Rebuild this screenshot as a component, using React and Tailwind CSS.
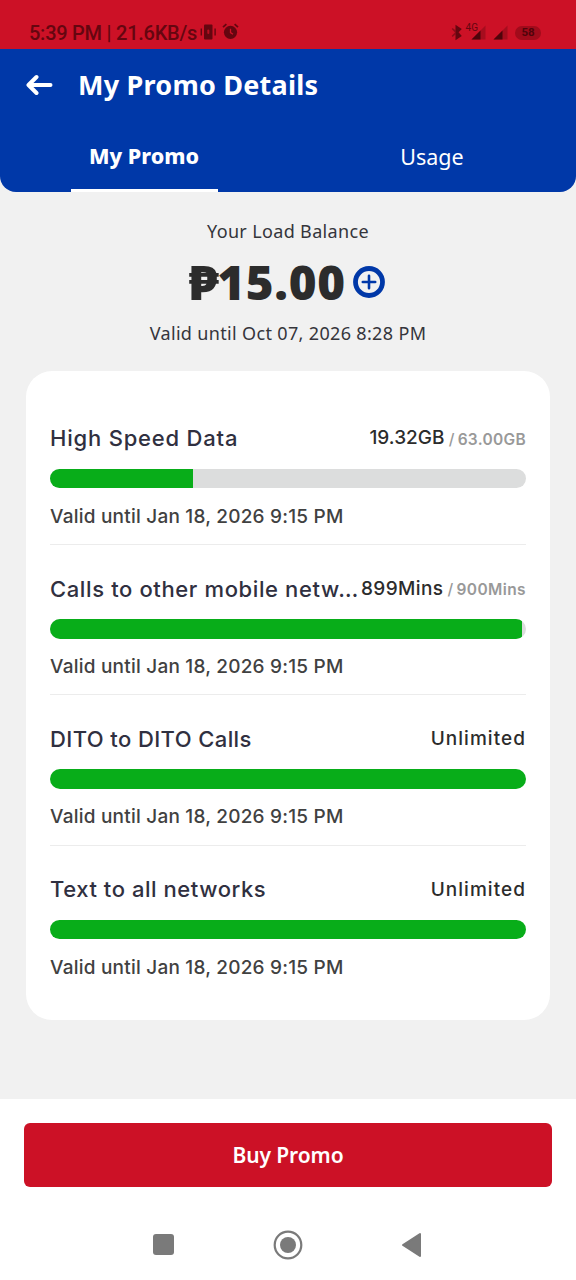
import React from "react";

const promos = [
  { name: "High Speed Data", nameStyle: "tracking-[0.8px]", left: "19.32GB", leftStyle: "tracking-[0.05px]", total: "63.00GB", totalStyle: "tracking-[0.3px]", percent: 30 },
  { name: "Calls to other mobile netw…", nameStyle: "tracking-[0.62px]", left: "899Mins", leftStyle: "tracking-[0.4px]", total: "900Mins", totalStyle: "tracking-[0.4px]", percent: 99.1 },
  { name: "DITO to DITO Calls", nameStyle: "tracking-[0.4px]", left: "Unlimited", leftStyle: "tracking-[1.05px]", percent: 100 },
  { name: "Text to all networks", nameStyle: "tracking-[0.55px]", left: "Unlimited", leftStyle: "tracking-[1.05px]", percent: 100 },
];

const VibrateIcon = () => (
  <svg width="18" height="18" viewBox="0 0 18 18" fill="#650610">
    <rect x="5" y="1.5" width="8.5" height="15" rx="1" />
    <rect x="1.6" y="5.5" width="1.4" height="7" />
    <rect x="15.4" y="5.5" width="1.4" height="7" />
    <rect x="8.3" y="6.5" width="2" height="4.5" rx="1" fill="#b80f20" />
  </svg>
);

const AlarmIcon = () => (
  <svg width="17" height="17" viewBox="0 0 17 17" fill="none" stroke="#650610">
    <circle cx="8.5" cy="9.3" r="6.6" fill="#650610" stroke="none" />
    <path d="M1 4.2 4.4 1.2M16 4.2 12.6 1.2" strokeWidth="1.8" />
    <path d="M8.5 5.8v3.8l2.5 1.7" stroke="#cc1126" strokeWidth="1.3" />
  </svg>
);

const BluetoothIcon = () => (
  <svg width="12" height="17" viewBox="0 0 12 17" fill="#650610">
    <path d="M4.5.8 10.8 5 7.6 8.3l3.2 3.6-6.3 4.3z" />
    <path d="M4.5 6.2 1.6 3.9.7 5 4 8.4.7 11.8l.9 1.1 2.9-2.3z" opacity=".6" />
  </svg>
);

const SignalIcon = () => (
  <svg width="15" height="15" viewBox="0 0 15 15">
    <path d="M14.5.5v14H.5z" fill="#a60d1e" />
    <path d="M9.5 5.5v9h-9z" fill="#4f040b" />
  </svg>
);

const StatusBar = () => (
  <div className="flex h-[49px] items-end bg-[#cc1126] pr-[35px] pb-1 pl-[29px] text-[#650610]">
    <div className="flex h-6 items-center">
      <span className="font-[Roboto,sans-serif] text-[20px] leading-6 font-medium tracking-[-0.25px] whitespace-nowrap">5:39 PM | 21.6KB/s</span>
      <span className="ml-[2px] flex items-center gap-[5px] pb-[3px]">
        <VibrateIcon />
        <AlarmIcon />
      </span>
    </div>
    <div className="ml-auto flex h-6 items-center pb-px">
      <BluetoothIcon />
      <span className="ml-[3px] self-start font-[Roboto,sans-serif] text-[10px] leading-[13px]">4G</span>
      <span className="-ml-[7px]"><SignalIcon /></span>
      <span className="ml-[7px]"><SignalIcon /></span>
      <span className="ml-[7px] flex h-[14px] w-[26px] items-center justify-center rounded-full bg-[#a10b1b] font-[Roboto,sans-serif] text-[11.5px] font-bold text-[#4f040b]">58</span>
    </div>
  </div>
);

const Header = () => (
  <header className="bg-[#f1f1f1]">
    <div className="rounded-b-2xl bg-[#0038a8] font-['Noto_Sans',sans-serif] text-white">
      <div className="flex h-[72px] items-center pl-[26px]">
        <svg width="27" height="22" viewBox="0 0 27 22" fill="none" stroke="currentColor" strokeWidth="4" strokeLinecap="round" strokeLinejoin="round">
          <path d="M10.5 3 2.5 11l8 8M3 11h21.5" />
        </svg>
        <h1 className="ml-[25px] text-[27px] leading-9 font-bold tracking-[0.22px] whitespace-nowrap">My Promo Details</h1>
      </div>
      <div className="grid h-[71px] grid-cols-2">
        <div className="flex justify-center">
          <span className="flex w-[147px] items-center justify-center border-b-[3.5px] border-white pt-0.5 text-[21.5px] font-extrabold">My Promo</span>
        </div>
        <span className="flex items-center justify-center pt-px text-[21.5px]">Usage</span>
      </div>
    </div>
  </header>
);

const Balance = () => (
  <section className="flex flex-col items-center font-['Noto_Sans',sans-serif] text-[#35353b]">
    <p className="mt-6 text-[18px] leading-[30px] tracking-[0.35px]">Your Load Balance</p>
    <div className="mt-2 flex h-[56px] items-center pr-[5px] text-[#2c2c2c]">
      <span className="flex text-[47.5px] leading-[56px] font-black tracking-[0.7px]">
        <span className="mr-[3px] inline-block origin-left translate-x-[3px] scale-x-110">₱</span>
        15.00
      </span>
      <svg className="ml-[7px]" width="32" height="32" viewBox="0 0 32 32" fill="none" stroke="#0038a8" strokeLinecap="round">
        <circle cx="16" cy="16" r="13.5" strokeWidth="4.8" />
        <path d="M16 9.8v12.4M9.8 16h12.4" strokeWidth="2.6" />
      </svg>
    </div>
    <p className="mt-2 text-[18px] leading-[30px] tracking-[0.34px]">Valid until Oct 07, 2026 8:28 PM</p>
  </section>
);

const PromoRow = ({ promo, last }) => (
  <div className={`h-[150.4px] pt-[26px] ${last ? "" : "border-b border-[#ececec]"}`}>
    <div className="flex h-9 items-center justify-between whitespace-nowrap">
      <span className={`text-[22px] font-medium text-[#303040] ${promo.nameStyle}`}>{promo.name}</span>
      <span className="flex items-center text-[19px] font-medium text-[#2c2c2c]">
        <span className={promo.leftStyle}>{promo.left}</span>
        {promo.total && (
          <span className="flex pt-px text-[15.5px] text-[#999]">
            <span className="w-[13px] pl-[4px]">/</span>
            <span className={`font-semibold ${promo.totalStyle}`}>{promo.total}</span>
          </span>
        )}
      </span>
    </div>
    <div className="mt-3 h-[19.5px] overflow-hidden rounded-full bg-[#dcdddd]">
      <div className="h-full bg-[#08ad19]" style={{ width: `${promo.percent}%` }} />
    </div>
    <p className="mt-[13.5px] text-[19px] leading-[30px] font-medium tracking-[0.22px] text-[#414141]">Valid until Jan 18, 2026 9:15 PM</p>
  </div>
);

const NavBar = () => (
  <nav className="mt-[43px] flex h-[30px] items-center pl-[153px] text-[#7a7a7a]">
    <div className="h-[21px] w-[21px] rounded-[3px] bg-[#7a7a7a]" />
    <svg className="ml-[98.5px]" width="30" height="30" viewBox="0 0 30 30">
      <circle cx="15" cy="15" r="13.3" fill="none" stroke="currentColor" strokeWidth="2.2" />
      <circle cx="15" cy="15" r="8" fill="currentColor" />
    </svg>
    <svg className="ml-[98.5px]" width="21" height="26" viewBox="0 0 21 26" fill="currentColor" stroke="currentColor" strokeWidth="2" strokeLinejoin="round">
      <path d="M19 2v22L2 13z" />
    </svg>
  </nav>
);

const App = () => {
  return (
    <div className="flex h-[1280px] w-[576px] flex-col overflow-hidden bg-[#f1f1f1]">
      <StatusBar />
      <Header />
      <Balance />
      <section className="mx-[26px] mt-[23px] h-[649px] rounded-[26px] bg-white px-6 pt-[23.7px] font-[Inter,sans-serif]">
        {promos.map((promo, i) => (
          <PromoRow key={promo.name} promo={promo} last={i === promos.length - 1} />
        ))}
      </section>
      <footer className="mt-auto h-[181px] bg-white">
        <div className="px-6 pt-[23.5px]">
          <button className="flex h-16 w-full items-center justify-center rounded-md bg-[#cc1126] pt-0.5 font-['Noto_Sans',sans-serif] text-[21px] font-semibold tracking-[-0.1px] text-white">Buy Promo</button>
        </div>
        <NavBar />
      </footer>
    </div>
  );
};

export default App;
